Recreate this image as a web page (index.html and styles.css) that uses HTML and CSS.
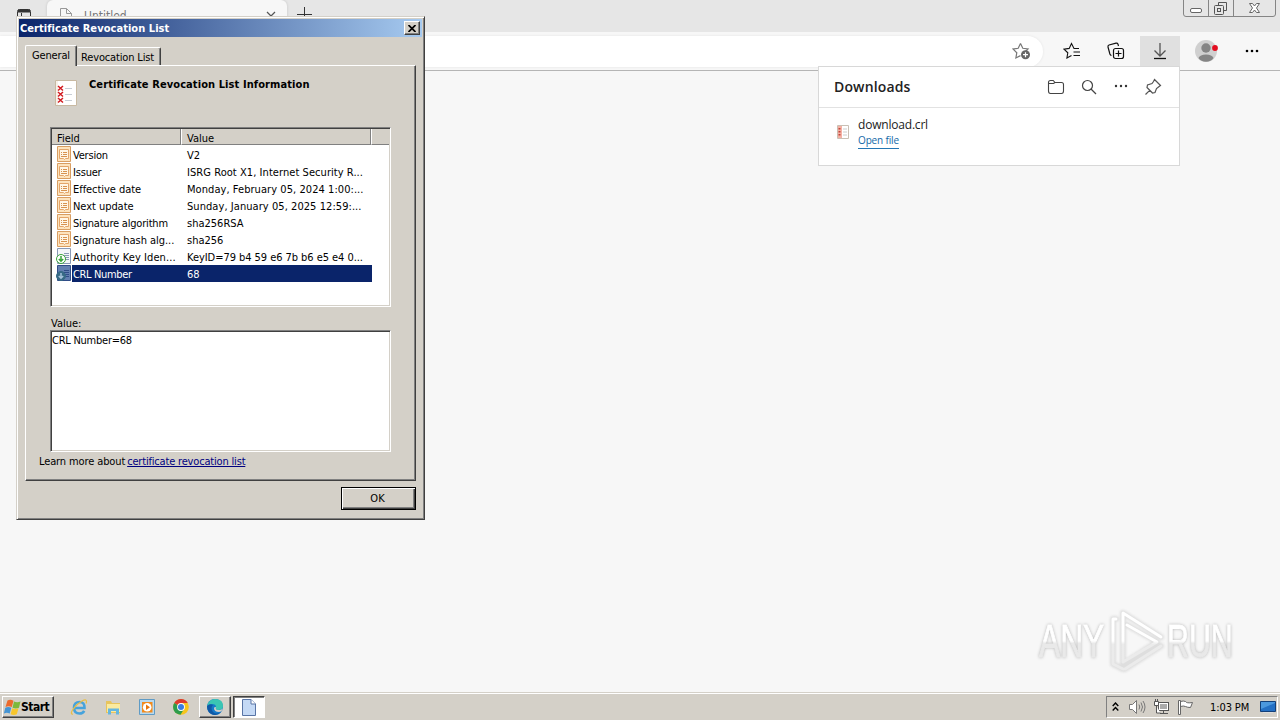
FILE: index.html
```html
<!DOCTYPE html>
<html lang="en">
<head>
    <meta charset="UTF-8">
    <meta name="viewport" content="width=device-width, initial-scale=1.0">
    <title>Certificate Revocation List</title>
    <link rel="stylesheet" href="styles.css">
</head>
<body>
<!-- Browser window -->
<div class="browser">
    <div class="tab-strip">
        <svg class="tab-menu" width="14" height="14" viewBox="0 0 14 14" fill="none" stroke="#333"><rect x=".5" y=".5" width="13" height="12" rx="2"/><path d="M1 2h12" stroke-width="3"/><path d="M4.500 4v8"/></svg>
        <div class="tab">
            <svg width="12" height="14" viewBox="0 0 12 14" fill="none" stroke="#999"><path d="M.5.5h6l5 5v8h-11zM6.500.5v5h5"/></svg>
            <span class="tab-title">Untitled</span>
            <svg width="10" height="10" viewBox="0 0 10 10" stroke="#555" stroke-width="1.200"><path d="M1 1l8 8M9 1L1 9"/></svg>
        </div>
        <svg class="new-tab" width="15" height="15" viewBox="0 0 15 15" stroke="#333"><path d="M0 7.500h15M7.500 0v15"/></svg>
        <div class="window-controls">
            <svg width="94" height="17" viewBox="0 0 94 17" fill="none" stroke="#858585">
                <path d="M.5 0v14q0 2.500 2.500 2.500h87q2.500 0 2.500-2.500V0M25.500 0v16M50.500 0v16"/>
                <rect x="7.500" y="8.500" width="11" height="4" rx="1.500" fill="#fff" stroke="#666"/>
                <g stroke="#555"><path d="M35.500 5.500v-3h8v8h-3"/><rect x="31.500" y="5.500" width="9" height="9" rx="1"/><rect x="34.500" y="8.500" width="3" height="3"/></g>
                <path d="M66.500 3.500h3l2 2.500 2-2.500h3l-3 4.500 3 4.500h-3l-2-2.500-2 2.500h-3l3-4.500z" fill="#fff" stroke="#666"/>
            </svg>
        </div>
    </div>
    <div class="toolbar">
        <div class="address-bar">
            <svg width="20" height="18" viewBox="0 0 20 18" fill="none" stroke="#777" stroke-width="1.200"><path d="M8.500 1.500l2.300 4.800 5.200.7-3.800 3.700M8.500 1.500L6.200 6.300 1 7l3.800 3.700-.9 5.300 4.600-2.400"/><circle cx="13.500" cy="12.700" r="4.500" fill="#666" stroke="none"/><path d="M11 12.700h5M13.500 10.200v5" stroke="#fff"/></svg>
        </div>
        <div class="tools">
            <svg class="tool-star" width="18" height="18" viewBox="0 0 18 18" fill="none" stroke="#111" stroke-width="1.100"><path d="M16 6.500h-5L8.500 1.500 6.200 6.400 1 7.100l3.800 3.700-.9 5.200 4.600-2.400M10.500 10h6.500M10.500 13.500h6.500"/></svg>
            <svg class="tool-collection" width="18" height="18" viewBox="0 0 18 18" fill="none" stroke="#111" stroke-width="1.200"><rect x="6.500" y="6.500" width="10" height="10" rx="2"/><path d="M8.500 11.500h6M11.500 8.500v6M4.500 13.500q-1.200-.2-1.600-1.500L1 5q-.3-1.500 1-2l7-1.800q1.500-.3 2 1L11.500 4"/></svg>
            <div class="tool-download"><svg width="14" height="18" viewBox="0 0 14 18" fill="none" stroke="#555" stroke-width="1.300"><path d="M7 1v13M1.500 8.500L7 14l5.500-5.500"/><path d="M1 16.500h12" stroke="#111"/></svg></div>
            <svg class="tool-profile" width="24" height="24" viewBox="0 0 24 24"><circle cx="12" cy="12" r="11" fill="#d0d0d0"/><circle cx="12" cy="9" r="4.700" fill="#858585"/><path d="M4.500 19q1.500-3.500 7.500-3.500t7.500 3.500Q17 22.800 12 22.800T4.500 19z" fill="#858585"/><circle cx="21" cy="9" r="2.900" fill="#e30e20"/></svg>
            <svg class="tool-more" width="14" height="4" viewBox="0 0 14 4"><circle cx="2" cy="2" r="1.300"/><circle cx="7" cy="2" r="1.300"/><circle cx="12" cy="2" r="1.300"/></svg>
        </div>
    </div>
    <div class="page"></div>
</div>

<!-- Downloads flyout -->
<div class="downloads">
    <div class="downloads-header">
        <span class="downloads-title">Downloads</span>
        <div class="downloads-actions">
            <svg width="18" height="16" viewBox="0 0 18 16" fill="none" stroke="#444" stroke-width="1.100"><path d="M1.500 12V3.500q0-2 2-2h2.700l1.800 2h6.500q2 0 2 2V12q0 2.500-2 2.500h-11q-2 0-2-2.500zM1.500 4.500h5L8 3.500"/></svg>
            <svg width="16" height="16" viewBox="0 0 16 16" fill="none" stroke="#444" stroke-width="1.200"><circle cx="6.500" cy="6.500" r="5"/><path d="M10 10l5 5"/></svg>
            <svg width="14" height="16" viewBox="0 0 14 16" fill="#333"><circle cx="2" cy="7" r="1.200"/><circle cx="7" cy="7" r="1.200"/><circle cx="12" cy="7" r="1.200"/></svg>
            <svg width="18" height="18" viewBox="0 0 18 18" fill="none" stroke="#555" stroke-width="1.200"><path d="M10.500 1.500L16.500 7.500 14.500 9 12.500 10.500 11 14.500 8.500 15 3 9.500 3.500 7 8 5.500 9.500 3.500zM5.700 12.300L1.500 16.500"/></svg>
        </div>
    </div>
    <div class="download-item">
        <svg width="12" height="14" viewBox="0 0 12 14"><path d="M.5.5h11v13H.5z" fill="#fff" stroke="#c9c0b5"/><path d="M1 1h4v12H1z" fill="#f4b1a4"/><path d="M2.500 3v1.500M2.500 6v1.500M2.500 9v1.500" stroke="#c2463a" stroke-width="2"/><path d="M6 4h4M6 7h4M6 10h4" stroke="#ccc"/></svg>
        <div class="download-text">
            <span class="download-name">download.crl</span>
            <a class="download-open">Open file</a>
        </div>
    </div>
</div>

<!-- Watermark -->
<div class="watermark">
    <div class="mark-word mark-any"><span>ANY</span></div>
    <svg width="58" height="66" viewBox="0 0 58 66" fill="none" stroke-linecap="round" stroke-linejoin="round">
        <defs><linearGradient id="fade" gradientUnits="userSpaceOnUse" x1="0" y1="0" x2="0" y2="66"><stop offset=".5" stop-color="#fff"/><stop offset=".55" stop-color="#ebebeb"/></linearGradient></defs>
        <g class="mark-shadow" stroke="#dedede" stroke-width="6"><path d="M8 11H5V56l10 5M15 58V5l38 24M19 17l30 17-34 22M17 61l36-23"/></g>
        <g stroke="url(#fade)" stroke-width="3"><path d="M8 11H5V56l10 5M15 54V5l38 24M19 17l30 17-34 20M17 61l36-23"/></g>
    </svg>
    <div class="mark-word mark-run"><span>RUN</span></div>
</div>

<!-- Certificate dialog -->
<div class="dialog">
    <div class="title-bar">
        <span>Certificate Revocation List</span>
        <div class="close-button"><svg width="8" height="7" viewBox="0 0 8 7" stroke="#000" stroke-width="1.700"><path d="M.5 0l7 7M7.500 0l-7 7"/></svg></div>
    </div>
    <div class="tabs">
        <div class="dialog-tab active">General</div>
        <div class="dialog-tab">Revocation List</div>
    </div>
    <div class="tab-panel">
        <div class="info-header">
            <svg width="24" height="28" viewBox="0 0 24 28"><path d="M1.500 1.500h21v25h-21z" fill="#fff" stroke="#c8b9a2"/><path d="M3 2v24" stroke="#eee2d2"/><path d="M4 7l5 4.500M9 7l-5 4.500M4 13l5 4.500M9 13l-5 4.500M4 19l5 4.500M9 19l-5 4.500" stroke="#d21b20" stroke-width="1.500"/><path d="M11 9.500h7M11 15.500h7M11 21.500h7" stroke="#c7cdd5"/></svg>
            <span class="info-title">Certificate Revocation List Information</span>
        </div>
        <div class="field-list">
            <div class="list-header"><div class="col-field">Field</div><div class="col-value">Value</div><div class="col-rest"></div></div>
            <div id="rows"></div>
        </div>
        <div class="value-label">Value:</div>
        <div class="value-box">CRL Number=68</div>
        <div class="learn-more"><span>Learn more about</span> <a>certificate revocation list</a></div>
    </div>
    <div class="dialog-buttons"><div class="ok-button">OK</div></div>
</div>

<!-- Taskbar -->
<div class="taskbar">
    <div class="start-button">
        <svg width="17" height="17" viewBox="0 0 17 17"><path d="M3.500 1.500q3-1.500 6 .3L7.800 8Q4.500 6.500 1.500 8z" fill="#ec6a2c"/><path d="M10 2.500q3 1.500 6.500 0L15 8.700q-3 1.500-6.500 0z" fill="#7db83b"/><path d="M1.300 8.700q3-1.500 6 0L5.700 14.500q-3-1.300-5.800 0z" fill="#4594d3"/><path d="M8.200 9.300q3 1.500 6.300 0l-1.700 6q-3 1.500-6.200 0z" fill="#f8c62c"/></svg>
        <span>Start</span>
    </div>
    <div class="quick-launch">
        <svg width="18" height="18" viewBox="0 0 18 18" fill="none"><path d="M4.200 10h10.300q.3-6-5-6t-5.500 5.700q.2 5.800 5.500 5.800 3.300 0 4.700-2.700" stroke="#46a3dc" stroke-width="2.600"/><path d="M3 16q-3 .5-.5-4Q6 6.500 12 3q4.500-2.500 4.500.5 0 1-.5 2" stroke="#e9be45" stroke-width="1.200"/></svg>
        <svg width="18" height="18" viewBox="0 0 18 18"><path d="M2 3h5l1 2h8v10H2z" fill="#e7c45d"/><path d="M3 6h13v8H3z" fill="#faea9f"/><path d="M4 16.500v-6h11v6h-3V13H7v3.500z" fill="#65b6df"/></svg>
        <svg width="18" height="18" viewBox="0 0 18 18"><path d="M1.500 1.500h15v15h-15z" fill="#b9d9ee" stroke="#5f9bc5"/><path d="M4 4h10.500v10.500H4z" fill="#f28a1c"/><circle cx="9.200" cy="9.200" r="4.300" fill="#fff"/><path d="M8 6.500l4 2.700-4 2.700z" fill="#e8760c"/></svg>
        <svg width="18" height="18" viewBox="0 0 18 18"><circle cx="9" cy="9" r="7.800" fill="#f6c51c"/><path d="M9 9L2.200 5A7.800 7.800 0 0 1 15.800 5H9z" fill="#dc3b2e"/><path d="M2.200 5A7.800 7.800 0 0 0 8.500 16.800L12 11 9 9z" fill="#2d9c4c"/><circle cx="9" cy="9" r="3.900" fill="#fff"/><circle cx="9" cy="9" r="3" fill="#397de2"/></svg>
    </div>
    <div class="task edge-task">
        <svg width="18" height="18" viewBox="0 0 18 18"><circle cx="9" cy="9" r="8" fill="#1579c8"/><path d="M1 8Q3 1 9 1q8 0 8 7 0 4-5 4-3 0-2-3 0-3-4-3-3 0-5 2z" fill="#3ac5b3"/><path d="M1 8q3-3 6-1-3 3 0 7 3 3 8 0Q12 18 7 16.700 1 15 1 8z" fill="#1059a5"/><path d="M10 9q-1 3 2 3 4 0 5-2-1 4-4 4-5 0-5-4 0-1 2-1z" fill="#d4d0c8"/></svg>
    </div>
    <div class="task active-task">
        <svg width="14" height="17" viewBox="0 0 14 17"><path d="M.5.5h8.500l4.500 4.500v11.500H.5z" fill="#c4d9f5" stroke="#5874a5"/><path d="M9 .5v4.500h4.500" fill="#fff" stroke="#5874a5"/></svg>
    </div>
    <div class="tray">
        <svg class="chevrons" width="7" height="10" viewBox="0 0 7 10" fill="none" stroke="#000" stroke-width="1.400"><path d="M.7 4l2.800-3 2.800 3M.7 8.500l2.800-3 2.800 3"/></svg>
        <svg class="speaker" width="18" height="16" viewBox="0 0 18 16" fill="#fff" stroke="#777"><path d="M1.500 5.500h3l4-4v13l-4-4h-3z"/><path d="M11 5.500q1.500 2.500 0 5M13 3.500q3 4.500 0 9M15 2q4 6 0 12" fill="none"/></svg>
        <svg class="network" width="17" height="16" viewBox="0 0 17 16" fill="#fff" stroke="#555"><rect x="5.500" y="3.500" width="10" height="8"/><path d="M7 5h7v5H7z" fill="#aaa" stroke="none"/><path d="M7 14.500h8M10.500 12v2M1.500 2.500h4v4h-4zM2.500 0v2M4.500 0v2M3.500 7v7h4"/></svg>
        <svg class="flag" width="17" height="16" viewBox="0 0 17 16" fill="#fff" stroke="#666"><path d="M1.500 1.500h2v14h-2zM3.500 2.500q3-1 5 0 1 2 7 1l-2 5q-3 0-5-1-2-1-5 0z"/></svg>
        <span class="clock">1:03 PM</span>
        <svg class="desktop" width="16" height="13" viewBox="0 0 16 13"><path d="M.5.5h15v10H.5z" fill="#2470c4" stroke="#123f79"/><path d="M1 8L15 2V1H1z" fill="#4b98de"/><path d="M3 11.500h10" stroke="#ddd"/></svg>
    </div>
</div>

<script>
const fields = [
    ['Version', 'V2'],
    ['Issuer', 'ISRG Root X1, Internet Security R...'],
    ['Effective date', 'Monday, February 05, 2024 1:00:...'],
    ['Next update', 'Sunday, January 05, 2025 12:59:...'],
    ['Signature algorithm', 'sha256RSA'],
    ['Signature hash alg...', 'sha256'],
    ['Authority Key Iden...', 'KeyID=79 b4 59 e6 7b b6 e5 e4 0...'],
    ['CRL Number', '68']
];

const fieldIcon = '<svg width="16" height="17" viewBox="0 0 16 17"><path d="M1.500.5h13v15h-13z" fill="#fde3bd" stroke="#d99e62"/><path d="M3.500 3.500h9v9h-3l-1 1-1-1h-4z" fill="#fff6e6" stroke="#e3a56a"/><path d="M5 6.500h1M7 6.500h4M5 8.500h1M7 8.500h4M5 10.500h6" stroke="#d7924f"/></svg>';

// extension fields get the green arrow badge
function extensionIcon(selected) {
    const page = selected ? '#627eb0' : '#f4f6fa';
    const line = selected ? '#304c87' : '#8999b5';
    const badge = selected ? '#376a86' : '#38a33a';
    return `<svg width="16" height="17" viewBox="0 0 16 17"><path d="M1.500.5h13v15h-13z" fill="${page}" stroke="${line}"/><path d="M8 5.500h5M8 7.500h5M9 9.500h4M9 11.500h4" stroke="${line}"/><circle cx="5" cy="11" r="4.500" fill="${selected ? badge : '#fff'}" stroke="${badge}"/><path d="M5 8v5M2.800 11L5 13.200l2.200-2.200" fill="none" stroke="${selected ? '#a7c3dc' : badge}" stroke-width="1.500"/></svg>`;
}

const rows = document.getElementById('rows');
fields.forEach((field, i) => {
    const row = document.createElement('div');
    const selected = i === 7;
    row.className = selected ? 'row selected' : 'row';
    row.innerHTML = `<div class="row-icon">${i < 6 ? fieldIcon : extensionIcon(selected)}</div><div class="row-name">${field[0]}</div><div class="row-value">${field[1]}</div>`;
    rows.appendChild(row);
});
</script>
</body>
</html>
```
FILE: styles.css
```css
* {
    box-sizing: border-box;
}

body {
    margin: 0;
    width: 1280px;
    height: 720px;
    overflow: hidden;
    display: flex;
    flex-direction: column;
    background-color: #f7f7f7;
    color: #000;
    font-family: "DejaVu Sans Condensed", "DejaVu Sans", sans-serif;
    font-size: 11px;
    line-height: 13px;
    white-space: nowrap;
}

svg {
    display: block;
    flex: none;
}

.browser {
    flex: 1;
    display: flex;
    flex-direction: column;
}

.tab-strip {
    height: 32px;
    background-color: #e6e6e6;
    display: flex;
    align-items: flex-start;
}

.tab-menu {
    margin: 9px 0 0 17px;
}

.tab {
    width: 240px;
    height: 32px;
    margin-left: 16px;
    padding: 8px 11px 0 13px;
    background-color: #f7f7f7;
    border-radius: 6px 6px 0 0;
    display: flex;
    box-shadow: 0 0 3px rgba(0, 0, 0, 0.15);
}

.tab-title {
    flex: 1;
    margin-left: 12px;
    padding-top: 2px;
    color: #777;
    font-size: 12px;
}

.tab > svg:last-child {
    margin-top: 3px;
}

.new-tab {
    margin: 7px 0 0 10px;
}

.window-controls {
    margin: 0 3px 0 auto;
}

.toolbar {
    height: 39px;
    background-color: #f7f7f7;
    border-bottom: 1px solid #b5b5b5;
    display: flex;
    padding-top: 4px;
}

.address-bar {
    width: 1043px;
    height: 31px;
    background-color: #fff;
    border-radius: 0 16px 16px 0;
    box-shadow: 0 0 3px rgba(0, 0, 0, 0.08);
    display: flex;
    justify-content: flex-end;
    padding: 6px 11px 0 0;
}

.tools {
    display: flex;
}

.tool-star {
    margin: 6px 0 0 20px;
}

.tool-collection {
    margin: 6px 0 0 26px;
}

.tool-download {
    width: 40px;
    height: 31px;
    margin-left: 15px;
    padding: 6px 13px;
    background-color: #e0e0e0;
}

.tool-profile {
    margin: 3px 0 0 14px;
}

.tool-more {
    margin: 13px 0 0 27px;
}

.page {
    flex: 1;
    background-color: #f7f7f7;
}

/* Downloads flyout */
.downloads {
    position: absolute;
    left: 818px;
    top: 66px;
    width: 362px;
    height: 100px;
    background-color: #fff;
    border: 1px solid #d8d8d8;
    font-family: "Open Sans", sans-serif;
    z-index: 2;
}

.downloads-header {
    height: 41px;
    border-bottom: 1px solid #e2e2e2;
    display: flex;
    align-items: center;
    justify-content: space-between;
    padding: 0 17px 0 15px;
}

.downloads-title {
    font-size: 14px;
    font-weight: 600;
    line-height: 18px;
    color: #222;
    letter-spacing: 0.15px;
}

.downloads-actions {
    display: flex;
    align-items: center;
    gap: 16px;
}

.downloads-actions svg:nth-child(2) {
    margin-right: 1px;
}

.download-item {
    display: flex;
    padding: 8px 0 0 18px;
}

.download-item > svg {
    margin-top: 9px;
}

.download-text {
    display: flex;
    flex-direction: column;
    align-items: flex-start;
    margin-left: 9px;
}

.download-name {
    font-size: 12px;
    line-height: 17px;
    color: #222;
    letter-spacing: -0.2px;
}

.download-open {
    font-size: 10px;
    line-height: 14px;
    height: 16px;
    color: #1268a8;
    border-bottom: 1px solid #2476b4;
    letter-spacing: -0.15px;
}

/* Watermark */
.watermark {
    position: absolute;
    left: 1039px;
    top: 608px;
    width: 196px;
    height: 66px;
    display: flex;
    align-items: center;
    font-family: "Liberation Sans", sans-serif;
    font-size: 46px;
    line-height: 46px;
}

.mark-word {
    flex: none;
    filter: drop-shadow(0 0 1.5px #b5b5b5);
}

.mark-word span {
    display: inline-block;
    transform-origin: left center;
    color: transparent;
    background: linear-gradient(#fff 50%, #e9e9e9 55%);
    -webkit-background-clip: text;
    background-clip: text;
    -webkit-text-stroke: 1px transparent;
}

.watermark svg {
    margin-left: 4px;
}

.mark-shadow {
    filter: blur(1px);
}

.mark-any {
    width: 65px;
}

.mark-any span {
    transform: scaleX(0.69);
}

.mark-run {
    width: 64px;
    margin-left: 1px;
}

.mark-run span {
    transform: scaleX(0.66);
}

/* Certificate dialog */
.dialog {
    position: absolute;
    left: 16px;
    top: 16px;
    width: 409px;
    height: 504px;
    background-color: #d4d0c8;
    border: 1px solid;
    border-color: #d4d0c8 #404040 #404040 #d4d0c8;
    box-shadow: inset 1px 1px #fff, inset -1px -1px #808080;
    padding: 2px;
    z-index: 3;
}

.title-bar {
    height: 18px;
    background: linear-gradient(to right, #0a246a, #a6caf0);
    display: flex;
    align-items: center;
    justify-content: space-between;
    padding: 0 2px 0 1px;
    color: #fff;
    font-weight: bold;
}

.title-bar span {
    letter-spacing: 0.05px;
}

.close-button {
    width: 16px;
    height: 14px;
    padding: 3px;
    background-color: #d4d0c8;
    border: 1px solid;
    border-color: #fff #404040 #404040 #fff;
    box-shadow: inset -1px -1px #808080;
}

.tabs {
    height: 28px;
    margin-left: 6px;
    display: flex;
    align-items: flex-end;
    letter-spacing: -0.15px;
}

.dialog-tab {
    height: 18px;
    padding: 3px 3px 0;
    border: 1px solid;
    border-color: #fff #404040 transparent transparent;
    border-bottom: 0;
    border-radius: 2px 2px 0 0;
    box-shadow: inset -1px 0 #808080;
    width: 84px;
}

.dialog-tab.active {
    width: 52px;
    height: 21px;
    margin-bottom: -1px;
    padding: 3px 6px 0;
    background-color: #d4d0c8;
    border-left-color: #fff;
    z-index: 1;
}

.tab-panel {
    width: 391px;
    height: 416px;
    margin-left: 6px;
    padding: 12px 24px 0;
    border: 1px solid;
    border-color: #fff #404040 #404040 #fff;
    box-shadow: inset -1px -1px #808080;
}

.info-header {
    height: 49px;
    display: flex;
    padding-left: 4px;
}

.info-header svg {
    margin-top: 1px;
}

.info-title {
    margin-left: 11px;
    font-weight: bold;
    letter-spacing: 0.09px;
}

.field-list,
.value-box {
    width: 341px;
    border: 1px solid;
    border-color: #808080 #fff #fff #808080;
    background-color: #fff;
    box-shadow: inset 1px 1px #404040, inset -1px -1px #d4d0c8;
}

.field-list {
    height: 180px;
    padding: 1px;
}

.list-header {
    display: flex;
    height: 16px;
}

.list-header div {
    height: 16px;
    background-color: #d4d0c8;
    border-bottom: 1px solid #808080;
    border-right: 1px solid #808080;
    padding: 3px 0 0 5px;
    line-height: 13px;
}

.list-header .col-field {
    width: 129px;
}

.list-header .col-value {
    width: 190px;
    border-left: 1px solid #fff;
}

.list-header .col-rest {
    flex: 1;
    border-left: 1px solid #fff;
    border-right: 0;
}

#rows {
    padding-top: 1px;
}

.row {
    height: 17px;
    display: flex;
    line-height: 19px;
}

.row-icon {
    width: 20px;
    padding-left: 4px;
}

.row-name {
    width: 110px;
    padding-left: 1px;
    letter-spacing: -0.2px;
}

.row-value {
    width: 190px;
    padding-left: 5px;
}

.row:nth-child(2) .row-value,
.row:nth-child(3) .row-value,
.row:nth-child(4) .row-value {
    letter-spacing: 0.06px;
}

.row:nth-child(3) .row-name,
.row:nth-child(4) .row-name,
.row:nth-child(6) .row-name {
    letter-spacing: -0.05px;
}

.row:nth-child(7) .row-name {
    letter-spacing: 0.08px;
}

.row:last-child .row-name {
    letter-spacing: -0.35px;
}

.row:nth-child(7) .row-value {
    letter-spacing: -0.05px;
}

.selected .row-name,
.selected .row-value {
    background-color: #0a246a;
    color: #fff;
}

.value-label {
    margin: 10px 0 0 1px;
    height: 13px;
}

.value-box {
    height: 122px;
    padding: 3px 1px;
    letter-spacing: -0.25px;
}

.learn-more {
    margin: 3px 0 0 -11px;
    display: flex;
    gap: 2px;
    letter-spacing: -0.12px;
}

.learn-more a {
    color: #000080;
    text-decoration: underline;
    letter-spacing: -0.18px;
}

.dialog-buttons {
    display: flex;
    justify-content: flex-end;
    padding: 6px 6px 0 0;
}

.ok-button {
    width: 75px;
    height: 23px;
    border: 1px solid #000;
    box-shadow: inset 1px 1px #fff, inset -1px -1px #404040, inset -2px -2px #808080;
    text-align: center;
    line-height: 21px;
    padding-right: 2px;
}

/* Taskbar */
.taskbar {
    height: 28px;
    background-color: #d4d0c8;
    border-top: 1px solid #d4d0c8;
    box-shadow: inset 0 1px #fff;
    display: flex;
    align-items: center;
    padding: 1px 2px 0;
}

.start-button {
    width: 52px;
    height: 22px;
    display: flex;
    align-items: center;
    border: 1px solid;
    border-color: #fff #404040 #404040 #fff;
    box-shadow: inset -1px -1px #808080;
    font-weight: bold;
    font-size: 12px;
    letter-spacing: -0.5px;
    padding-left: 1px;
}

.quick-launch {
    display: flex;
    gap: 16px;
    margin-left: 16px;
}

.task {
    width: 32px;
    height: 22px;
    display: flex;
    align-items: center;
    justify-content: center;
    border: 1px solid;
}

.edge-task {
    margin-left: 9px;
    border-color: #fff #404040 #404040 #fff;
    box-shadow: inset -1px -1px #808080;
}

.active-task {
    margin-left: 2px;
    background-color: #fff;
    border-color: #404040 #fff #fff #404040;
    box-shadow: inset 1px 1px #808080;
}

.tray {
    width: 172px;
    height: 22px;
    margin-left: auto;
    display: flex;
    align-items: center;
    border: 1px solid;
    border-color: #808080 #fff #fff #808080;
    padding: 0 1px 0 5px;
}

.speaker {
    margin-left: 9px;
}

.network {
    margin-left: 7px;
}

.flag {
    margin-left: 7px;
}

.clock {
    margin-left: 16px;
    letter-spacing: -0.1px;
}

.desktop {
    margin-left: auto;
}
```
